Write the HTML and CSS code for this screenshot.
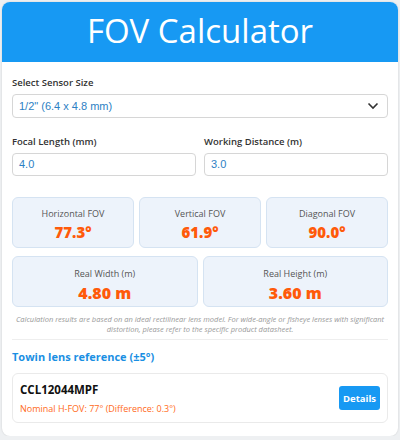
FILE: index.html
```html
<!DOCTYPE html>
<html>
	<head>
		<meta charset="UTF-8" />
		<meta name="viewport" content="width=device-width, initial-scale=1.0" />
		<link rel="stylesheet" href="styles.css">
	</head>
	<body>
	<div class="card">
		<div class="header">FOV Calculator</div>

		<div class="content">
			<label class="label">Select Sensor Size</label>
			<div class="select">
				<span>1/2" (6.4 x 4.8 mm)</span>
				<svg width="12" height="8" viewBox="0 0 12 8"><path d="M1.5 1.5 L6 6 L10.5 1.5" fill="none" stroke="#333" stroke-width="1.6"/></svg>
			</div>

			<div class="row">
				<div class="field">
					<label class="label">Focal Length (mm)</label>
					<div class="input">4.0</div>
				</div>
				<div class="field">
					<label class="label">Working Distance (m)</label>
					<div class="input">3.0</div>
				</div>
			</div>

			<div class="results three">
				<div class="result">
					<div class="result-label">Horizontal FOV</div>
					<div class="result-value">77.3°</div>
				</div>
				<div class="result">
					<div class="result-label">Vertical FOV</div>
					<div class="result-value">61.9°</div>
				</div>
				<div class="result">
					<div class="result-label">Diagonal FOV</div>
					<div class="result-value">90.0°</div>
				</div>
			</div>
			<div class="results two">
				<div class="result">
					<div class="result-label">Real Width (m)</div>
					<div class="result-value big">4.80 m</div>
				</div>
				<div class="result">
					<div class="result-label">Real Height (m)</div>
					<div class="result-value big">3.60 m</div>
				</div>
			</div>

			<p class="note">Calculation results are based on an ideal rectilinear lens model. For wide-angle or fisheye lenses with significant distortion, please refer to the specific product datasheet.</p>

			<div class="ref-title">Towin lens reference (±5°)</div>

			<div class="product">
				<div>
					<div class="product-name">CCL12044MPF</div>
					<div class="product-info">Nominal H-FOV: 77° (Difference: 0.3°)</div>
				</div>
				<button class="details">Details</button>
			</div>
		</div>
	</div>
	</body>
</html>
```

FILE: styles.css
```css
body {
	margin: 0;
	padding: 2px 2px 0 2px;
	background-color: #eef0f2;
	font-family: "Open Sans", "Noto Sans", sans-serif;
}

.card {
	background: #fff;
	border-radius: 8px;
	overflow: hidden;
	height: 434px;
	box-shadow: 0 0 2px rgba(0,0,0,0.15);
}

.header {
	background-color: #1799f3;
	color: #fff;
	text-align: center;
	font-size: 33px;
	height: 60px;
	line-height: 58px;
}

.content {
	padding: 14px 10px 0 10px;
}

.label {
	display: block;
	font-size: 9.5px;
	font-weight: 600;
	color: #333;
	margin-bottom: 5px;
}

.select {
	display: flex;
	justify-content: space-between;
	align-items: center;
	height: 24px;
	border: 1px solid #d6d6d6;
	border-radius: 4px;
	padding: 0 8px 0 6px;
	font-family: "Liberation Sans", Arial, sans-serif;
	font-size: 11px;
	color: #2d7fc4;
	box-sizing: border-box;
}

.row {
	display: flex;
	gap: 8px;
	margin-top: 17px;
}

.field {
	flex: 1;
}

.input {
	height: 23px;
	line-height: 21px;
	border: 1px solid #d6d6d6;
	border-radius: 4px;
	padding: 0 6px;
	font-family: "Liberation Sans", Arial, sans-serif;
	font-size: 11px;
	color: #2d7fc4;
	box-sizing: border-box;
}

.results {
	display: grid;
	gap: 5px;
}

.results.three {
	grid-template-columns: 1fr 1fr 1fr;
	margin-top: 21px;
}

.results.two {
	grid-template-columns: 1fr 1fr;
	margin-top: 8px;
}

.result {
	background-color: #edf3fb;
	border: 1px solid #d5e3f2;
	border-radius: 6px;
	text-align: center;
	height: 51px;
	box-sizing: border-box;
	padding-top: 9px;
}

.results.two .result {
	height: 51px;
	padding-top: 10px;
}

.result-label {
	font-size: 9px;
	color: #555;
}

.result-value {
	font-size: 15px;
	font-weight: 800;
	color: #ff5a0a;
	margin-top: 2px;
}

.result-value.big {
	font-size: 16px;
}

.note {
	margin: 7px 0 0 0;
	padding: 0 2px 5px 2px;
	border-bottom: 1px solid #eee;
	font-size: 7.5px;
	font-style: italic;
	color: #999;
	text-align: center;
	line-height: 10px;
}

.ref-title {
	color: #1a8fe3;
	font-size: 11px;
	font-weight: 700;
	margin-top: 9px;
}

.product {
	display: flex;
	justify-content: space-between;
	align-items: center;
	margin-top: 9px;
	border: 1px solid #eaeaea;
	border-radius: 6px;
	height: 50px;
	padding: 0 7px 0 7px;
	box-sizing: border-box;
}

.product-name {
	font-size: 11.5px;
	font-weight: 700;
	color: #111;
}

.product-info {
	font-size: 9px;
	color: #ff6a1a;
	margin-top: 5px;
}

.details {
	background-color: #1799f3;
	color: #fff;
	border: none;
	border-radius: 3px;
	font-family: "Open Sans", sans-serif;
	font-weight: 700;
	font-size: 9.5px;
	width: 41px;
	height: 24px;
	padding: 0;
}
```
